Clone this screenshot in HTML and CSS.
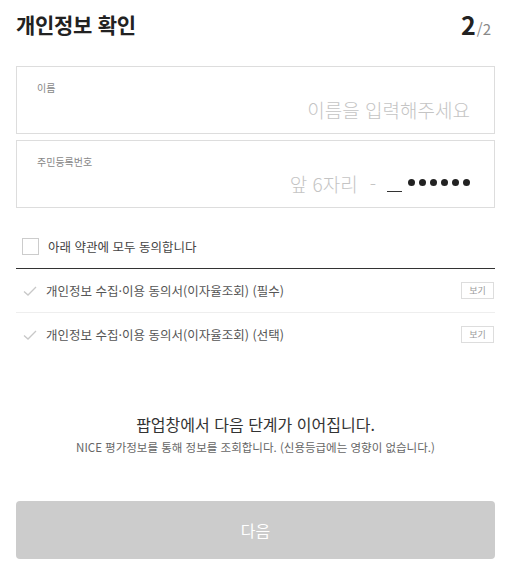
FILE: index.html
```
<!DOCTYPE html>
<html lang="ko">
<head>
    <meta charset="UTF-8">
    <meta name="viewport" content="width=device-width, initial-scale=1.0">
    <title>개인정보 확인</title>
    <link rel="stylesheet" href="styles.css">
</head>
<body>
    <div class="page">
        <div class="header">
            <h2>개인정보 확인</h2>
            <div class="step"><b>2</b>/2</div>
        </div>

        <div class="field">
            <label>이름</label>
            <div class="field-value">
                <span class="placeholder">이름을 입력해주세요</span>
            </div>
        </div>
        <div class="field">
            <label>주민등록번호</label>
            <div class="field-value">
                <span class="placeholder">앞 6자리</span>
                <span class="placeholder dash">-</span>
                <span class="cursor"></span>
                <span class="dots">
                    <i></i><i></i><i></i><i></i><i></i><i></i>
                </span>
            </div>
        </div>

        <div class="agree-all">
            <span class="checkbox"></span>
            <span>아래 약관에 모두 동의합니다</span>
        </div>

        <ul class="terms">
            <li>
                <svg class="check" width="14" height="10" viewBox="0 0 14 10"><path d="M1 5.5 L5 9 L13 1" fill="none" stroke="#c8c8c8" stroke-width="1.3"/></svg>
                <span class="term-text">개인정보 수집·이용 동의서(이자율조회) (필수)</span>
                <button class="view">보기</button>
            </li>
            <li>
                <svg class="check" width="14" height="10" viewBox="0 0 14 10"><path d="M1 5.5 L5 9 L13 1" fill="none" stroke="#c8c8c8" stroke-width="1.3"/></svg>
                <span class="term-text">개인정보 수집·이용 동의서(이자율조회) (선택)</span>
                <button class="view">보기</button>
            </li>
        </ul>

        <div class="notice">
            <p class="notice-main">팝업창에서 다음 단계가 이어집니다.</p>
            <p class="notice-sub">NICE 평가정보를 통해 정보를 조회합니다. (신용등급에는 영향이 없습니다.)</p>
        </div>

        <button class="next" disabled>다음</button>
    </div>
</body>
</html>
```

FILE: styles.css
```
body {
    margin: 0;
    font-family: "Noto Sans CJK KR", "Noto Sans", sans-serif;
    color: #333;
    background: #fff;
}
.page {
    width: 479px;
    margin-left: 16px;
}
.header {
    display: flex;
    justify-content: space-between;
    align-items: center;
    height: 48px;
}
.header h2 {
    margin: 0;
    font-size: 21px;
    font-weight: 700;
    color: #222;
    letter-spacing: -0.3px;
}
.step {
    font-size: 15px;
    color: #888;
    margin-right: 4px;
}
.step b {
    font-size: 25px;
    color: #222;
    margin-right: 1px;
}
.field {
    border: 1px solid #ddd;
    height: 68px;
    box-sizing: border-box;
    padding: 13px 24px 0 20px;
    margin-top: 18px;
}
.field + .field {
    margin-top: 6px;
}
.field label {
    display: block;
    font-size: 10px;
    color: #888;
    line-height: 16px;
}
.field-value {
    display: flex;
    justify-content: flex-end;
    align-items: center;
    height: 24px;
    margin-top: 1px;
}
.placeholder {
    font-size: 19px;
    color: #c4c4c4;
    font-weight: 300;
}
.dash {
    margin-left: 12px;
}
.cursor {
    width: 15px;
    height: 1px;
    background: #333;
    margin: 20px 6px 0 11px;
    align-self: flex-start;
}
.dots {
    display: flex;
    gap: 4px;
    margin-bottom: 2px;
}
.dots i {
    width: 7px;
    height: 7px;
    border-radius: 50%;
    background: #222;
}
.agree-all {
    display: flex;
    align-items: center;
    gap: 9px;
    padding: 29px 0 12px 6px;
    border-bottom: 1px solid #333;
    font-size: 12.5px;
    color: #444;
}
.checkbox {
    width: 15px;
    height: 15px;
    border: 1px solid #ccc;
}
.terms {
    list-style: none;
    margin: 0;
    padding: 0;
}
.terms li {
    display: flex;
    align-items: center;
    height: 43px;
    border-bottom: 1px solid #eee;
    padding-left: 7px;
    font-size: 12.5px;
    color: #555;
}
.terms li:last-child {
    border-bottom: none;
}
.check {
    margin-right: 9px;
}
.term-text {
    flex: 1;
}
.view {
    font-family: inherit;
    font-size: 9px;
    color: #999;
    background: #fff;
    border: 1px solid #ddd;
    padding: 0;
    width: 33px;
    height: 17px;
    margin-right: 1px;
}
.notice {
    text-align: center;
    margin-top: 57px;
}
.notice p {
    margin: 0;
}
.notice-main {
    font-size: 16px;
    color: #333;
    line-height: 22px;
}
.notice-sub {
    font-size: 11.5px;
    color: #666;
    line-height: 18px;
    margin-top: 3px !important;
}
.next {
    display: block;
    width: 100%;
    height: 58px;
    margin-top: 45px;
    border: none;
    border-radius: 4px;
    background: #ccc;
    color: #fff;
    font-family: inherit;
    font-size: 16px;
}
```
